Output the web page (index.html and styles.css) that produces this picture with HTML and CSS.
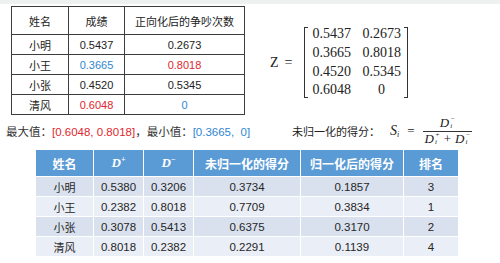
FILE: index.html
```html
<!DOCTYPE html>
<html lang="zh">
<head>
    <meta charset="UTF-8">
    <title>TOPSIS 得分</title>
    <link rel="stylesheet" href="styles.css">
</head>
<body>
    <div class="band"></div>

    <div class="top">
        <table class="t1">
            <colgroup><col class="c1"><col class="c2"><col class="c3"></colgroup>
            <tr class="head"><td>姓名</td><td>成绩</td><td>正向化后的争吵次数</td></tr>
            <tr><td>小明</td><td>0.5437</td><td>0.2673</td></tr>
            <tr><td>小王</td><td class="blue">0.3665</td><td class="red">0.8018</td></tr>
            <tr><td>小张</td><td>0.4520</td><td>0.5345</td></tr>
            <tr><td>清风</td><td class="red">0.6048</td><td class="blue">0</td></tr>
        </table>

        <div class="matrix">
            <span class="z">Z</span>
            <span class="eq">=</span>
            <span class="lb"></span>
            <div class="grid">
                <span>0.5437</span><span>0.2673</span>
                <span>0.3665</span><span>0.8018</span>
                <span>0.4520</span><span>0.5345</span>
                <span>0.6048</span><span>0</span>
            </div>
            <span class="rb"></span>
        </div>
    </div>

    <div class="mid">
        <p class="range">最大值：<span class="red">[0.6048, 0.8018]</span>，最小值：<span class="blue">[0.3665, &nbsp;0]</span></p>
        <div class="formula">
            <span class="label">未归一化的得分：</span>
            <i class="var">S</i><span class="sub">i</span>
            <span class="feq">=</span>
            <span class="frac">
                <span class="num"><i>D</i><span class="ss"><span>−</span><span>i</span></span></span>
                <span class="den"><i>D</i><span class="ss"><span>+</span><span>i</span></span><span class="plus">+</span><i>D</i><span class="ss"><span>−</span><span>i</span></span></span>
            </span>
        </div>
    </div>

    <table class="t2">
        <colgroup>
            <col style="width:58px"><col style="width:50px"><col style="width:50px">
            <col style="width:107px"><col style="width:103px"><col style="width:55px">
        </colgroup>
        <tr><th>姓名</th><th class="d"><i>D</i><sup>+</sup></th><th class="d"><i>D</i><sup>−</sup></th><th>未归一化的得分</th><th>归一化后的得分</th><th>排名</th></tr>
        <tr><td>小明</td><td>0.5380</td><td>0.3206</td><td>0.3734</td><td>0.1857</td><td>3</td></tr>
        <tr><td>小王</td><td>0.2382</td><td>0.8018</td><td>0.7709</td><td>0.3834</td><td>1</td></tr>
        <tr><td>小张</td><td>0.3078</td><td>0.5413</td><td>0.6375</td><td>0.3170</td><td>2</td></tr>
        <tr><td>清风</td><td>0.8018</td><td>0.2382</td><td>0.2291</td><td>0.1139</td><td>4</td></tr>
    </table>
</body>
</html>
```

FILE: styles.css
```css
body {
    margin: 0;
    font-family: "Liberation Sans", "Noto Sans CJK SC", sans-serif;
    background: #fff;
    color: #222;
}
.band {
    height: 4px;
    background: #edf1ef;
}
.red { color: #e0262e; }
.blue { color: #2f86d0; }

/* top: source table + matrix */
.top {
    display: flex;
    align-items: center;
    padding: 2px 0 0 11px;
}
.t1 {
    border-collapse: collapse;
    table-layout: fixed;
    width: 233px;
    font-size: 11px;
}
.t1 .c1 { width: 57px; }
.t1 .c2 { width: 56px; }
.t1 .c3 { width: 120px; }
.t1 td {
    border: 1px solid #3c3c3c;
    text-align: center;
    height: 19px;
    padding: 0;
}
.t1 .head td { height: 27px; }

.matrix {
    display: flex;
    align-items: center;
    margin-left: 25px;
    margin-top: 4px;
    font-family: "Liberation Serif", serif;
    font-size: 14px;
    color: #222;
}
.z { font-size: 14px; }
.eq { margin: 0 12px 0 6px; }
.lb, .rb {
    width: 3px;
    height: 69px;
    border: 1px solid #333;
}
.lb { border-right: none; }
.rb { border-left: none; }
.grid {
    display: grid;
    grid-template-columns: 38px 38px;
    column-gap: 12px;
    line-height: 18.6px;
    text-align: center;
    margin: 0 4px;
}

/* middle: extremes + formula */
.mid {
    display: flex;
    align-items: center;
    height: 32px;
}
.range {
    margin: 0;
    width: 292px;
    padding-left: 6px;
    box-sizing: border-box;
    font-size: 11.5px;
    color: #333;
    white-space: nowrap;
}
.formula {
    display: flex;
    align-items: center;
    font-family: "Liberation Serif", "Noto Sans CJK SC", serif;
    font-size: 13px;
    color: #222;
}
.label { font-size: 11px; margin-right: 10px; }
.var { font-size: 14px; }
.sub { font-size: 8px; font-style: italic; margin-top: 6px; }
.feq { margin: 0 8px; }
.frac {
    display: inline-flex;
    flex-direction: column;
    align-items: center;
}
.num, .den {
    display: flex;
    align-items: center;
    height: 15px;
}
.den {
    border-top: 1px solid #333;
    padding: 0 2px;
}
.plus { margin: 0 4px; }
.frac i { font-size: 13px; }
.ss {
    display: inline-flex;
    flex-direction: column;
    font-size: 7px;
    line-height: 7px;
    font-style: italic;
    margin-left: 1px;
}

/* result table */
.t2 {
    margin: 2px 0 0 35px;
    border-collapse: collapse;
    table-layout: fixed;
    width: 423px;
    font-size: 11.5px;
    color: #262626;
}
.t2 th, .t2 td {
    border: 1px solid #fff;
    padding: 0;
    text-align: center;
}
.t2 th {
    background: #5b9bd5;
    color: #fff;
    height: 26px;
    font-size: 12px;
    font-weight: bold;
}
.t2 th.d {
    font-family: "Liberation Serif", serif;
    font-size: 13px;
}
.t2 th sup { font-size: 8px; }
.t2 td { height: 19px; }
.t2 tr:nth-child(even) td { background: #d9e1ef; }
.t2 tr:nth-child(odd) td { background: #eaeef6; }
.t2 td:first-child { font-size: 11px; }
```
